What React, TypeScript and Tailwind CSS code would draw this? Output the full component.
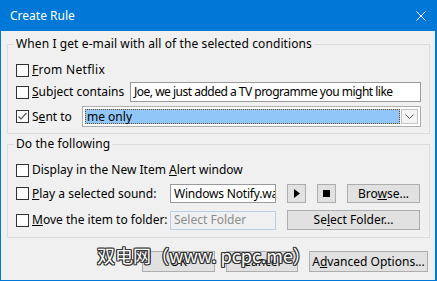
import React from "react";

const Check = ({ checked = false }: { checked?: boolean }) => (
  <div className="w-[13px] h-[13px] shrink-0 border border-[#333333] bg-white flex items-center justify-center">
    {checked && (
      <svg width="11" height="11" viewBox="0 0 11 11">
        <polyline points="1.5,5.5 4,8 9.5,2" fill="none" stroke="#555" strokeWidth="1.2" />
      </svg>
    )}
  </div>
);

const Btn = ({ className, children }: { className?: string; children: React.ReactNode }) => (
  <div
    className={`flex items-center justify-center border border-[#adadad] bg-[#e1e1e1] text-black ${className ?? ""}`}
  >
    {children}
  </div>
);

const Group = ({ title, children, className }: { title: string; children: React.ReactNode; className?: string }) => (
  <fieldset className={`border border-[#dcdcdc] px-[8px] pt-0 ${className ?? ""}`}>
    <legend className="ml-[-2px] px-[2px] leading-[16px] tracking-[0.1px]">{title}</legend>
    {children}
  </fieldset>
);

export default function App() {
  return (
    <div className="w-[437px] h-[281px] overflow-hidden relative bg-[#0078d7] font-['Noto_Sans',sans-serif] text-[12px] text-black">
      {/* title bar */}
      <div className="h-[31px] flex items-center justify-between pl-[10px] pr-[11px] text-white">
        <span className="leading-none">Create Rule</span>
        <svg width="10" height="10" viewBox="0 0 10 10">
          <path d="M0.5 0.5 L9.5 9.5 M9.5 0.5 L0.5 9.5" stroke="#fff" strokeWidth="1" />
        </svg>
      </div>

      <div className="ml-[1px] mr-[2px] h-[249px] bg-[#f0f0f0] pl-[6px] pr-[5px] pt-[5px]">
        <Group title="When I get e-mail with all of the selected conditions" className="pb-[6px]">
          <div className="mt-[8px] h-[20px] flex items-center gap-[3px]">
            <Check />
            <span className="tracking-[0.3px]">
              <span className="underline">F</span>rom Netflix
            </span>
          </div>
          <div className="mt-[2px] h-[20px] flex items-center">
            <div className="w-[114px] flex items-center gap-[3px]">
              <Check />
              <span>
                <span className="underline">S</span>ubject contains
              </span>
            </div>
            <div className="flex-1 h-full border border-[#9a9a9a] bg-white flex items-center pl-[3px] tracking-[-0.5px] whitespace-nowrap overflow-hidden">
              Joe, we just added a TV programme you might like
            </div>
          </div>
          <div className="mt-[4px] h-[21px] flex items-center">
            <div className="w-[66px] flex items-center gap-[3px]">
              <Check checked />
              <span>
                S<span className="underline">e</span>nt to
              </span>
            </div>
            <div className="flex-1 h-full border border-[#acacac] bg-white flex items-center p-[2px]">
              <div className="flex-1 h-full bg-[#90c6f8] border border-dotted border-[#7a4a1c] flex items-center pl-[1px]">
                me only
              </div>
              <div className="w-[17px] h-full ml-[1px] border border-[#c4c4c4] bg-[#f4f4f4] flex items-center justify-center">
                <svg width="9" height="5" viewBox="0 0 9 5">
                  <polyline points="0.5,0.5 4.5,4.5 8.5,0.5" fill="none" stroke="#555" strokeWidth="1" />
                </svg>
              </div>
            </div>
          </div>
        </Group>

        <Group title="Do the following" className="mt-[2px] pb-[7px]">
          <div className="mt-[8px] h-[20px] flex items-center gap-[3px]">
            <Check />
            <span>
              Display in the New Item <span className="underline">A</span>lert window
            </span>
          </div>
          <div className="mt-[4px] h-[19px] flex items-center">
            <div className="w-[154px] flex items-center gap-[3px]">
              <Check />
              <span>
                <span className="underline">P</span>lay a selected sound:
              </span>
            </div>
            <div className="w-[106px] h-full border border-[#9a9a9a] bg-white flex items-center pl-[3px] overflow-hidden whitespace-nowrap tracking-[-0.2px]">
              Windows Notify.wav
            </div>
            <Btn className="ml-[11px] w-[19px] h-full">
              <svg width="6" height="9" viewBox="0 0 6 9">
                <polygon points="0,0 6,4.5 0,9" fill="#000" />
              </svg>
            </Btn>
            <Btn className="ml-[11px] w-[19px] h-full">
              <div className="w-[7px] h-[7px] bg-black" />
            </Btn>
            <Btn className="ml-[11px] w-[73px] h-full">
              <span>
                Bro<span className="underline">w</span>se...
              </span>
            </Btn>
          </div>
          <div className="mt-[7px] h-[20px] flex items-center">
            <div className="w-[154px] flex items-center gap-[3px]">
              <Check />
              <span>
                <span className="underline">M</span>ove the item to folder:
              </span>
            </div>
            <div className="w-[106px] h-[19px] border border-[#b8cfe6] bg-[#f0f0f0] text-[#8c8c8c] flex items-center pl-[3px]">
              Select Folder
            </div>
            <Btn className="ml-[11px] w-[133px] h-full">
              <span>
                Se<span className="underline">l</span>ect Folder...
              </span>
            </Btn>
          </div>
        </Group>

        <div className="mt-[13px] h-[21px] flex justify-end gap-[11px] pr-[2px]">
          <Btn className="w-[73px] bg-[#cccccc]">OK</Btn>
          <Btn className="w-[72px]">Cancel</Btn>
          <Btn className="w-[119px]">
            <span>
              A<span className="underline">d</span>vanced Options...
            </span>
          </Btn>
        </div>
      </div>

      {/* watermark */}
      <div className="absolute left-[97px] top-[243px] text-[18px] leading-[24px] text-white font-['Noto_Sans_CJK_SC',sans-serif] whitespace-nowrap [text-shadow:1px_0_#333,-1px_0_#333,0_1px_#333,0_-1px_#333,1px_1px_#333,-1px_-1px_#333,1px_-1px_#333,-1px_1px_#333]">
        双电网（www. pcpc.me）
      </div>
    </div>
  );
}
